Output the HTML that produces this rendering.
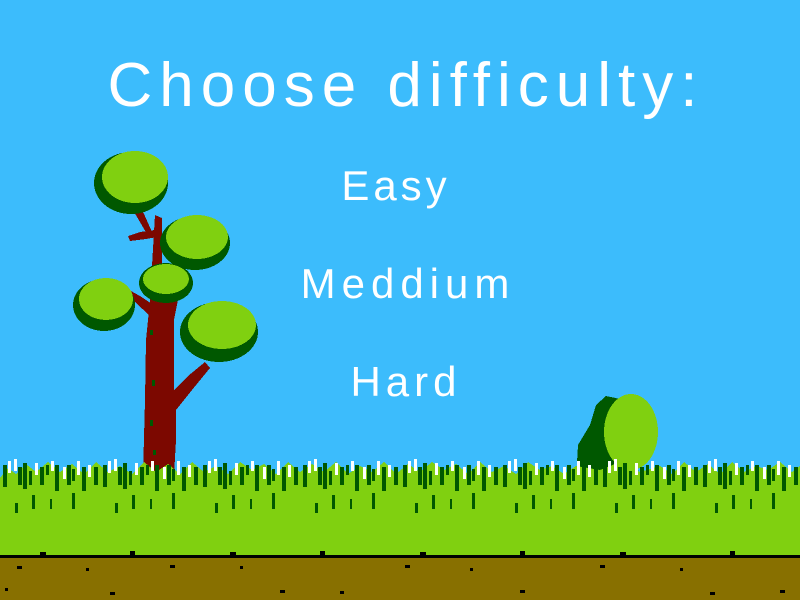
<!DOCTYPE html>
<html><head><meta charset="utf-8"><style>
html,body{margin:0;padding:0;background:#3cbcfc;}
body{width:800px;height:600px;overflow:hidden;position:relative;font-family:"Liberation Sans",sans-serif;}
.t{position:absolute;color:#fff;text-align:center;width:800px;left:0;font-family:"Liberation Sans",sans-serif;}
</style></head><body>
<svg width="800" height="600" style="position:absolute;left:0;top:0" shape-rendering="crispEdges">
<defs>
<pattern id="gb" x="0" y="455" width="100" height="60" patternUnits="userSpaceOnUse">
<rect x="3" y="10" width="4" height="22" fill="#005800"/>
<rect x="8" y="6" width="3" height="12" fill="#fff"/>
<rect x="14" y="4" width="3" height="12" fill="#fff"/>
<rect x="18" y="12" width="4" height="18" fill="#005800"/>
<rect x="23" y="8" width="4" height="26" fill="#005800"/>
<rect x="29" y="16" width="3" height="14" fill="#005800"/>
<rect x="35" y="8" width="3" height="12" fill="#fff"/>
<rect x="40" y="12" width="4" height="18" fill="#005800"/>
<rect x="46" y="10" width="3" height="10" fill="#005800"/>
<rect x="51" y="6" width="3" height="10" fill="#fff"/>
<rect x="55" y="10" width="4" height="26" fill="#005800"/>
<rect x="63" y="12" width="3" height="12" fill="#fff"/>
<rect x="67" y="10" width="4" height="20" fill="#005800"/>
<rect x="72" y="14" width="3" height="12" fill="#005800"/>
<rect x="77" y="6" width="3" height="14" fill="#fff"/>
<rect x="82" y="12" width="4" height="24" fill="#005800"/>
<rect x="88" y="10" width="3" height="12" fill="#fff"/>
<rect x="94" y="12" width="4" height="18" fill="#005800"/>
<rect x="32" y="40" width="3" height="14" fill="#005800"/>
<rect x="72" y="38" width="3" height="16" fill="#005800"/>
<rect x="15" y="48" width="3" height="10" fill="#005800"/>
<rect x="50" y="44" width="2" height="10" fill="#005800"/>
</pattern>
</defs>
<!-- tree trunk -->
<g fill="#7c0800">
<polygon points="143,475 145,400 146,340 150,300 155,215 162,218 162,300 168,300 170,285 180,290 174,320 174,390 188,376 205,362 210,368 192,390 176,410 176,440 174,475"/>
<polygon points="150,316 135,302 118,292 122,286 140,296 152,304"/>
<polygon points="155,230 140,232 128,236 130,241 146,239 157,237"/>
<polygon points="130,205 140,205 152,232 147,234"/>
</g>
<g fill="#005800"><rect x="150" y="330" width="3" height="5"/><rect x="152" y="380" width="3" height="6"/><rect x="150" y="420" width="3" height="6"/><rect x="153" y="450" width="3" height="5"/></g>
<!-- canopies -->
<g>
<ellipse cx="131" cy="183" rx="37" ry="31" fill="#005800"/>
<ellipse cx="135" cy="177" rx="33" ry="26" fill="#80d010"/>
<ellipse cx="195" cy="243" rx="35" ry="27" fill="#005800"/>
<ellipse cx="197" cy="237" rx="31" ry="22" fill="#80d010"/>
<ellipse cx="166" cy="283" rx="27" ry="20" fill="#005800"/>
<ellipse cx="166" cy="279" rx="23" ry="15" fill="#80d010"/>
<ellipse cx="104" cy="305" rx="31" ry="26" fill="#005800"/>
<ellipse cx="106" cy="299" rx="27" ry="21" fill="#80d010"/>
<ellipse cx="219" cy="332" rx="39" ry="30" fill="#005800"/>
<ellipse cx="222" cy="325" rx="34" ry="24" fill="#80d010"/>
</g>
<!-- bush -->
<polygon points="576,480 578,445 590,425 596,405 606,396 625,400 640,480" fill="#005800"/>
<ellipse cx="631" cy="432" rx="27" ry="38" fill="#80d010"/>
<!-- grass -->
<rect x="0" y="478" width="800" height="80" fill="#80d010"/>
<path d="M0,478 L8,468 L16,474 L26,464 L36,472 L48,462 L60,472 L72,464 L84,474 L96,462 L108,472 L120,466 L132,474 L144,462 L156,472 L168,464 L180,474 L192,462 L204,472 L216,466 L228,474 L240,462 L252,470 L264,464 L276,474 L288,462 L300,472 L312,464 L324,472 L336,462 L348,474 L360,466 L372,472 L384,462 L396,474 L408,464 L420,472 L432,462 L444,470 L456,464 L468,474 L480,462 L492,472 L504,466 L516,474 L528,462 L540,470 L552,466 L564,474 L576,466 L600,470 L620,462 L640,472 L660,466 L672,474 L684,462 L696,472 L708,464 L720,474 L732,462 L744,472 L756,466 L768,470 L780,462 L792,472 L800,466 L800,482 L0,482Z" fill="#80d010"/>
<rect x="0" y="455" width="800" height="60" fill="url(#gb)"/>
<!-- ground line & dirt -->
<rect x="0" y="555" width="800" height="3" fill="#000"/>
<g fill="#000"><rect x="40" y="552" width="6" height="3"/><rect x="130" y="551" width="5" height="4"/><rect x="230" y="552" width="6" height="3"/><rect x="320" y="551" width="5" height="4"/><rect x="420" y="552" width="6" height="3"/><rect x="520" y="551" width="5" height="4"/><rect x="620" y="552" width="6" height="3"/><rect x="730" y="551" width="5" height="4"/></g>
<rect x="0" y="558" width="800" height="42" fill="#887000"/>
<g fill="#000">
<rect x="17" y="566" width="5" height="3"/><rect x="86" y="568" width="3" height="3"/><rect x="170" y="565" width="5" height="3"/><rect x="240" y="566" width="3" height="3"/><rect x="405" y="565" width="5" height="3"/><rect x="470" y="568" width="3" height="3"/><rect x="600" y="565" width="5" height="3"/><rect x="680" y="568" width="3" height="3"/>
<rect x="5" y="588" width="3" height="3"/><rect x="110" y="592" width="5" height="3"/><rect x="280" y="590" width="5" height="3"/><rect x="340" y="591" width="4" height="3"/><rect x="520" y="590" width="5" height="3"/><rect x="710" y="592" width="5" height="3"/><rect x="780" y="590" width="5" height="3"/>
</g>
</svg>
<div class="t" style="top:50px;font-size:62px;letter-spacing:7px;left:6px;">Choose difficulty:</div>
<div class="t" style="top:162px;font-size:42px;letter-spacing:4px;left:-4px;">Easy</div>
<div class="t" style="top:260px;font-size:42px;letter-spacing:6px;left:8px;">Meddium</div>
<div class="t" style="top:358px;font-size:42px;letter-spacing:5px;left:6px;">Hard</div>
</body></html>
